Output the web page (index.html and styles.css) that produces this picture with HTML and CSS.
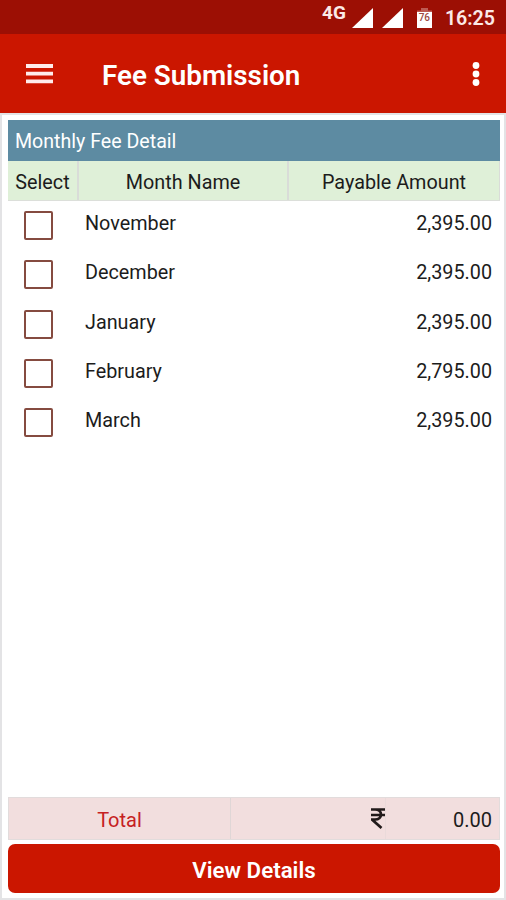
FILE: index.html
```html
<!DOCTYPE html>
<html lang="en">
<head>
  <meta charset="UTF-8">
  <title>Fee Submission</title>
  <link rel="stylesheet" href="styles.css">
</head>
<body>
  <div class="status-bar">
    <span class="network">4G</span>
    <svg class="signal" width="21" height="20" viewBox="0 0 21 20"><path d="M0 20L21 0V20Z" fill="#fff"/></svg>
    <svg class="signal second" width="21" height="20" viewBox="0 0 21 20"><path d="M0 20L21 0V20Z" fill="#fff"/></svg>
    <div class="battery">
      <svg width="15" height="4" viewBox="0 0 15 4"><path d="M0 4V2.5H4V0H11V2.5H15V4Z" fill="#bd5b52"/></svg>
      <span>76</span>
    </div>
    <span class="clock">16:25</span>
  </div>

  <header class="app-bar">
    <svg class="menu-icon" width="27" height="20" viewBox="0 0 27 20"><path d="M0 2H27M0 9.7H27M0 17.4H27" stroke="#ffeceb" stroke-width="3.8"/></svg>
    <h1>Fee Submission</h1>
    <svg class="more-icon" width="8" height="24" viewBox="0 0 8 24" fill="#fff"><circle cx="4" cy="3.5" r="3.4"/><circle cx="4" cy="12" r="3.4"/><circle cx="4" cy="20.5" r="3.4"/></svg>
  </header>

  <main class="panel">
    <h2>Monthly Fee Detail</h2>
    <div class="table-head">
      <div>Select</div>
      <div>Month Name</div>
      <div>Payable Amount</div>
    </div>
    <div class="rows">
      <label class="row"><input type="checkbox"><span class="month">November</span><span class="amount">2,395.00</span></label>
      <label class="row"><input type="checkbox"><span class="month">December</span><span class="amount">2,395.00</span></label>
      <label class="row"><input type="checkbox"><span class="month">January</span><span class="amount">2,395.00</span></label>
      <label class="row"><input type="checkbox"><span class="month">February</span><span class="amount">2,795.00</span></label>
      <label class="row"><input type="checkbox"><span class="month">March</span><span class="amount">2,395.00</span></label>
    </div>
    <div class="total">
      <div class="total-label">Total</div>
      <div class="currency"><svg width="14" height="21" viewBox="0 0 14 21" fill="none" stroke="#211a1a" stroke-width="2.7"><path d="M0 1.5H14M0 7H14M1 1.5H4C12 1.5 12 11.5 4 11.5H1L10.5 20"/></svg></div>
      <div class="total-amount">0.00</div>
    </div>
    <button type="button">View Details</button>
  </main>
</body>
</html>
```

FILE: styles.css
```css
* {
  box-sizing: border-box;
}

body {
  display: flex;
  flex-direction: column;
  height: 900px;
  margin: 0;
  font-family: Roboto, "Liberation Sans", sans-serif;
  font-size: 19.8px;
  color: #1c1c1c;
  background: #fff;
}

.status-bar {
  display: flex;
  align-items: flex-start;
  height: 34px;
  padding-right: 11px;
  justify-content: flex-end;
  background: #9c0f04;
  color: #fbe9e7;
}

.network {
  margin-top: 3px;
  font-size: 19px;
  line-height: 20px;
  font-weight: 700;
}

.signal {
  margin: 8px 0 0 6px;
}

.second {
  margin-left: 9px;
}

.battery {
  display: flex;
  flex-direction: column;
  width: 15px;
  height: 20px;
  margin: 8px 0 0 14px;
  color: #9c4a43;
  font-size: 10px;
  font-weight: 500;
  text-align: center;
}

.battery span {
  height: 16px;
  background: #fff;
  line-height: 12px;
}

.clock {
  margin: 7px 0 0 13px;
  font-size: 19.6px;
  line-height: 23px;
  font-weight: 600;
}

.app-bar {
  display: flex;
  align-items: center;
  height: 79px;
  padding: 0 26px;
  background: #cb1600;
  color: #fff;
}

.app-bar h1 {
  flex: 1;
  margin: 3px 0 0 49px;
  font-size: 27.8px;
  font-weight: 600;
}

.menu-icon,
.more-icon {
  flex: none;
}

.panel {
  flex: 1;
  display: flex;
  flex-direction: column;
  padding: 5px 4px 5px 6px;
  border: 2px solid #e3e3e5;
}

.panel h2 {
  height: 41px;
  margin: 0;
  padding-left: 7px;
  background: #5d8ba2;
  color: #fff;
  font-size: 19.6px;
  font-weight: 400;
  line-height: 43px;
}

.table-head {
  display: grid;
  grid-template-columns: 71px 210px 1fr;
  height: 40px;
  border-bottom: 1px solid #dcdfda;
  background: #dff0d8;
  line-height: 44px;
  text-align: center;
}

.table-head div {
  height: 39px;
  border-right: 2px solid #d9dcd8;
}

.table-head div:last-child {
  border-right-width: 1px;
}

.rows {
  flex: 1;
}

.row {
  display: flex;
  height: 49.25px;
  padding: 10px 8px 0 16px;
  line-height: 25px;
}

.row input {
  appearance: none;
  width: 29px;
  height: 29px;
  margin: 0;
  border: 2px solid #854b40;
  border-radius: 2px;
}

.month {
  flex: 1;
  margin-left: 32px;
}

.total {
  display: grid;
  grid-template-columns: 222px 155px 1fr;
  height: 43px;
  margin-bottom: 4px;
  border: 1px solid #e2dcdc;
  background: #f2dede;
  font-size: 20px;
  line-height: 44px;
}

.total-label,
.currency {
  height: 41px;
}

.total-label {
  border-right: 1px solid #dfd6d6;
  color: #c62022;
  text-align: center;
}

.currency {
  display: flex;
  justify-content: flex-end;
  align-items: center;
  border-right: 1px solid #eadada;
}

.total-amount {
  padding-right: 7px;
  text-align: right;
}

button {
  height: 49px;
  padding: 3px 0 0;
  border: none;
  border-radius: 7px;
  background: #cb1600;
  color: #fff;
  font-family: inherit;
  font-size: 22.3px;
  font-weight: 600;
}
```
